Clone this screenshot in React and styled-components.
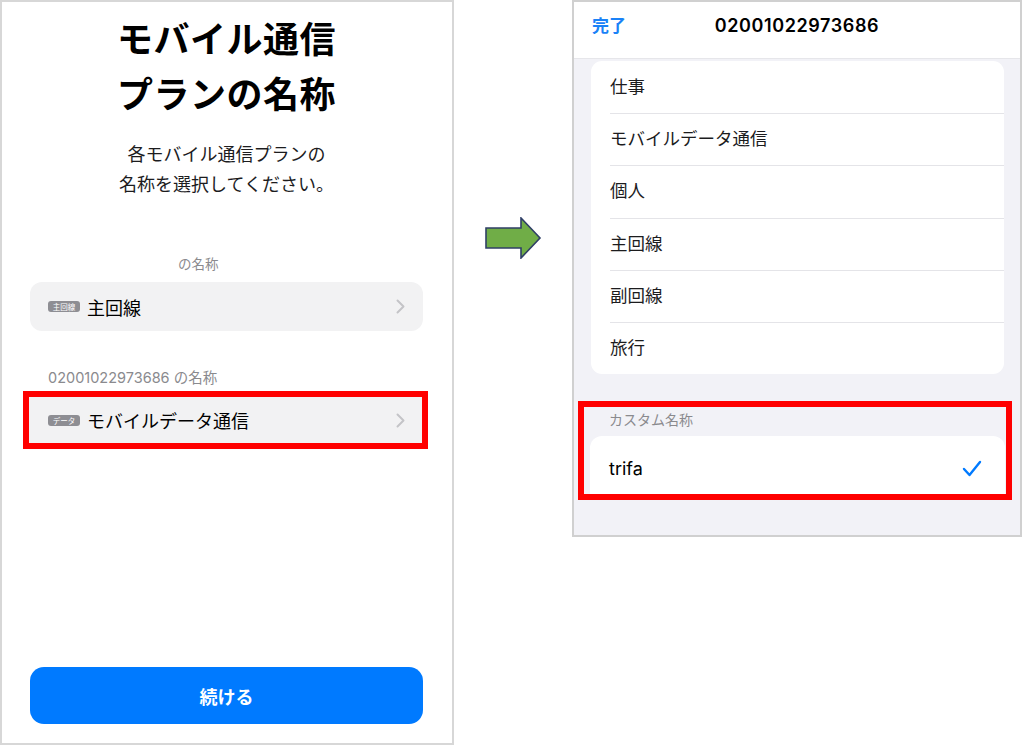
import React from "react";
import styled, { createGlobalStyle } from "styled-components";

const GlobalStyle = createGlobalStyle`
  html, body { margin: 0; padding: 0; background: #ffffff; }
  body {
    font-family: "Noto Sans CJK JP", "Noto Sans", sans-serif;
    -webkit-font-smoothing: antialiased;
  }
  * { box-sizing: border-box; }
`;

const Page = styled.div`
  width: 1024px;
  height: 745px;
  display: flex;
  align-items: flex-start;
  background: #ffffff;
  overflow: hidden;
`;

/* ---------- left phone screen ---------- */

const SetupScreen = styled.section`
  width: 454px;
  height: 745px;
  border: 2px solid #d7d7d7;
  display: flex;
  flex-direction: column;
  padding: 8px 29px 19px 28px;
  flex-shrink: 0;
`;

const Title = styled.h1`
  margin: 0;
  text-align: center;
  font-size: 36px;
  line-height: 55px;
  font-weight: 700;
  color: #000000;
  letter-spacing: 0.5px;
`;

const Lead = styled.p`
  margin: 18px 0 0;
  text-align: center;
  font-size: 18px;
  line-height: 30px;
  color: #1c1c1e;
`;

const GroupLabel = styled.div`
  margin-top: ${(p) => p.$top}px;
  padding-left: ${(p) => p.$indent}px;
  font-family: "Inter", "Noto Sans CJK JP", sans-serif;
  font-size: ${(p) => p.$size || 13.5}px;
  line-height: 18px;
  color: #8a8a8e;
`;

const PlanCell = styled.div`
  margin-top: 9px;
  height: 49px;
  border-radius: 12px;
  background: #f2f2f3;
  display: flex;
  align-items: center;
  padding: 0 18px;
`;

const Highlight = styled.div`
  margin: ${(p) => p.$margin};
  border: 6px solid #ff0000;
  padding: ${(p) => p.$pad || "0"};
`;

const FlatCell = styled(PlanCell)`
  margin-top: 0;
  height: 46px;
  border-radius: 0;
  padding-left: 19px;
  padding-right: 17px;
`;

const Badge = styled.span`
  display: inline-flex;
  align-items: center;
  justify-content: center;
  width: 32px;
  height: 11px;
  border-radius: 3px;
  background: #8e8e93;
  color: #ffffff;
  font-size: 7.5px;
  line-height: 11px;
  margin-right: 7px;
  flex-shrink: 0;
`;

const CellText = styled.span`
  flex: 1;
  font-size: 18px;
  color: #000000;
`;

const Chevron = () => (
  <svg width="9" height="15" viewBox="0 0 9 15" fill="none">
    <polyline
      points="1.5,1.5 7.5,7.5 1.5,13.5"
      stroke="#c4c4c7"
      strokeWidth="2"
      strokeLinecap="round"
      strokeLinejoin="round"
    />
  </svg>
);

const ContinueButton = styled.button`
  margin-top: auto;
  width: 100%;
  height: 57px;
  border: none;
  border-radius: 14px;
  background: #007aff;
  color: #ffffff;
  font-family: inherit;
  font-size: 18px;
  font-weight: 700;
`;

/* ---------- arrow between screens ---------- */

const ArrowWrap = styled.div`
  margin: 217px 30px 0 31px;
  width: 57px;
  height: 42px;
  flex-shrink: 0;
`;

const RightArrow = () => (
  <svg width="57" height="42" viewBox="0 0 57 42">
    <polygon
      points="1,11 36,11 36,1 55,21 36,41 36,31 1,31"
      fill="#70ad47"
      stroke="#2f3f66"
      strokeWidth="1.6"
      strokeLinejoin="miter"
    />
  </svg>
);

/* ---------- right phone screen ---------- */

const PickerScreen = styled.section`
  width: 450px;
  height: 537px;
  border: 2px solid #d0d0d0;
  background: #f2f2f7;
  display: flex;
  flex-direction: column;
  flex-shrink: 0;
`;

const NavBar = styled.header`
  height: 57px;
  background: #ffffff;
  border-bottom: 1px solid #e6e6ea;
  display: grid;
  grid-template-columns: 1fr auto 1fr;
  align-items: start;
  padding: 11px 18px 0 18px;
`;

const DoneButton = styled.span`
  font-size: 17px;
  line-height: 26px;
  font-weight: 700;
  color: #1a82f7;
  margin-top: -1px;
`;

const NavTitle = styled.span`
  font-family: "Inter", "Noto Sans", sans-serif;
  font-size: 18px;
  line-height: 26px;
  font-weight: 600;
  color: #000000;
  letter-spacing: 0.6px;
`;

const OptionList = styled.ul`
  list-style: none;
  margin: 2px 16px 0 17px;
  padding: 0;
  background: #ffffff;
  border-radius: 11px;
  overflow: hidden;
`;

const OptionRow = styled.li`
  height: 52.2px;
  display: flex;
  align-items: center;
  padding: 0 0 3px 19px;
  font-size: 17.5px;
  color: #1c1c1e;
  position: relative;

  & + &::before {
    content: "";
    position: absolute;
    top: 0;
    left: 19px;
    right: 0;
    height: 1px;
    background: #e4e4e8;
  }
`;

const CustomLabel = styled(GroupLabel)`
  font-family: "Noto Sans CJK JP", sans-serif;
  font-size: 14px;
`;

const CustomCard = styled.div`
  margin-top: 8px;
  height: 58px;
  background: #ffffff;
  border-radius: 12px 12px 0 0;
  display: flex;
  align-items: center;
  padding: 6px 23px 0 19px;
`;

const CustomText = styled.span`
  flex: 1;
  font-family: "Inter", "Noto Sans", sans-serif;
  font-size: 18px;
  color: #000000;
`;

const Check = () => (
  <svg width="20" height="17" viewBox="0 0 20 17" fill="none">
    <polyline
      points="2,9 7.5,15 18,2"
      stroke="#007aff"
      strokeWidth="2.4"
      strokeLinecap="round"
      strokeLinejoin="round"
    />
  </svg>
);

const options = ["仕事", "モバイルデータ通信", "個人", "主回線", "副回線", "旅行"];

export default function App() {
  return (
    <>
      <GlobalStyle />
      <Page>
        <SetupScreen>
          <Title>
            モバイル通信
            <br />
            プランの名称
          </Title>
          <Lead>
            各モバイル通信プランの
            <br />
            名称を選択してください。
          </Lead>

          <GroupLabel $top={57} $indent={148}>
            の名称
          </GroupLabel>
          <PlanCell>
            <Badge>主回線</Badge>
            <CellText>主回線</CellText>
            <Chevron />
          </PlanCell>

          <GroupLabel $top={38} $indent={18} $size={14.5}>
            02001022973686 の名称
          </GroupLabel>
          <Highlight $margin="4px -5px 0 -7px">
            <FlatCell>
              <Badge>データ</Badge>
              <CellText>モバイルデータ通信</CellText>
              <Chevron />
            </FlatCell>
          </Highlight>

          <ContinueButton>続ける</ContinueButton>
        </SetupScreen>

        <ArrowWrap>
          <RightArrow />
        </ArrowWrap>

        <PickerScreen>
          <NavBar>
            <DoneButton>完了</DoneButton>
            <NavTitle>02001022973686</NavTitle>
            <span />
          </NavBar>
          <OptionList>
            {options.map((o) => (
              <OptionRow key={o}>{o}</OptionRow>
            ))}
          </OptionList>
          <Highlight $margin="27px 8px 0 4px" $pad="3px 1px 0 6px">
            <CustomLabel $top={0} $indent={19}>
              カスタム名称
            </CustomLabel>
            <CustomCard>
              <CustomText>trifa</CustomText>
              <Check />
            </CustomCard>
          </Highlight>
        </PickerScreen>
      </Page>
    </>
  );
}
